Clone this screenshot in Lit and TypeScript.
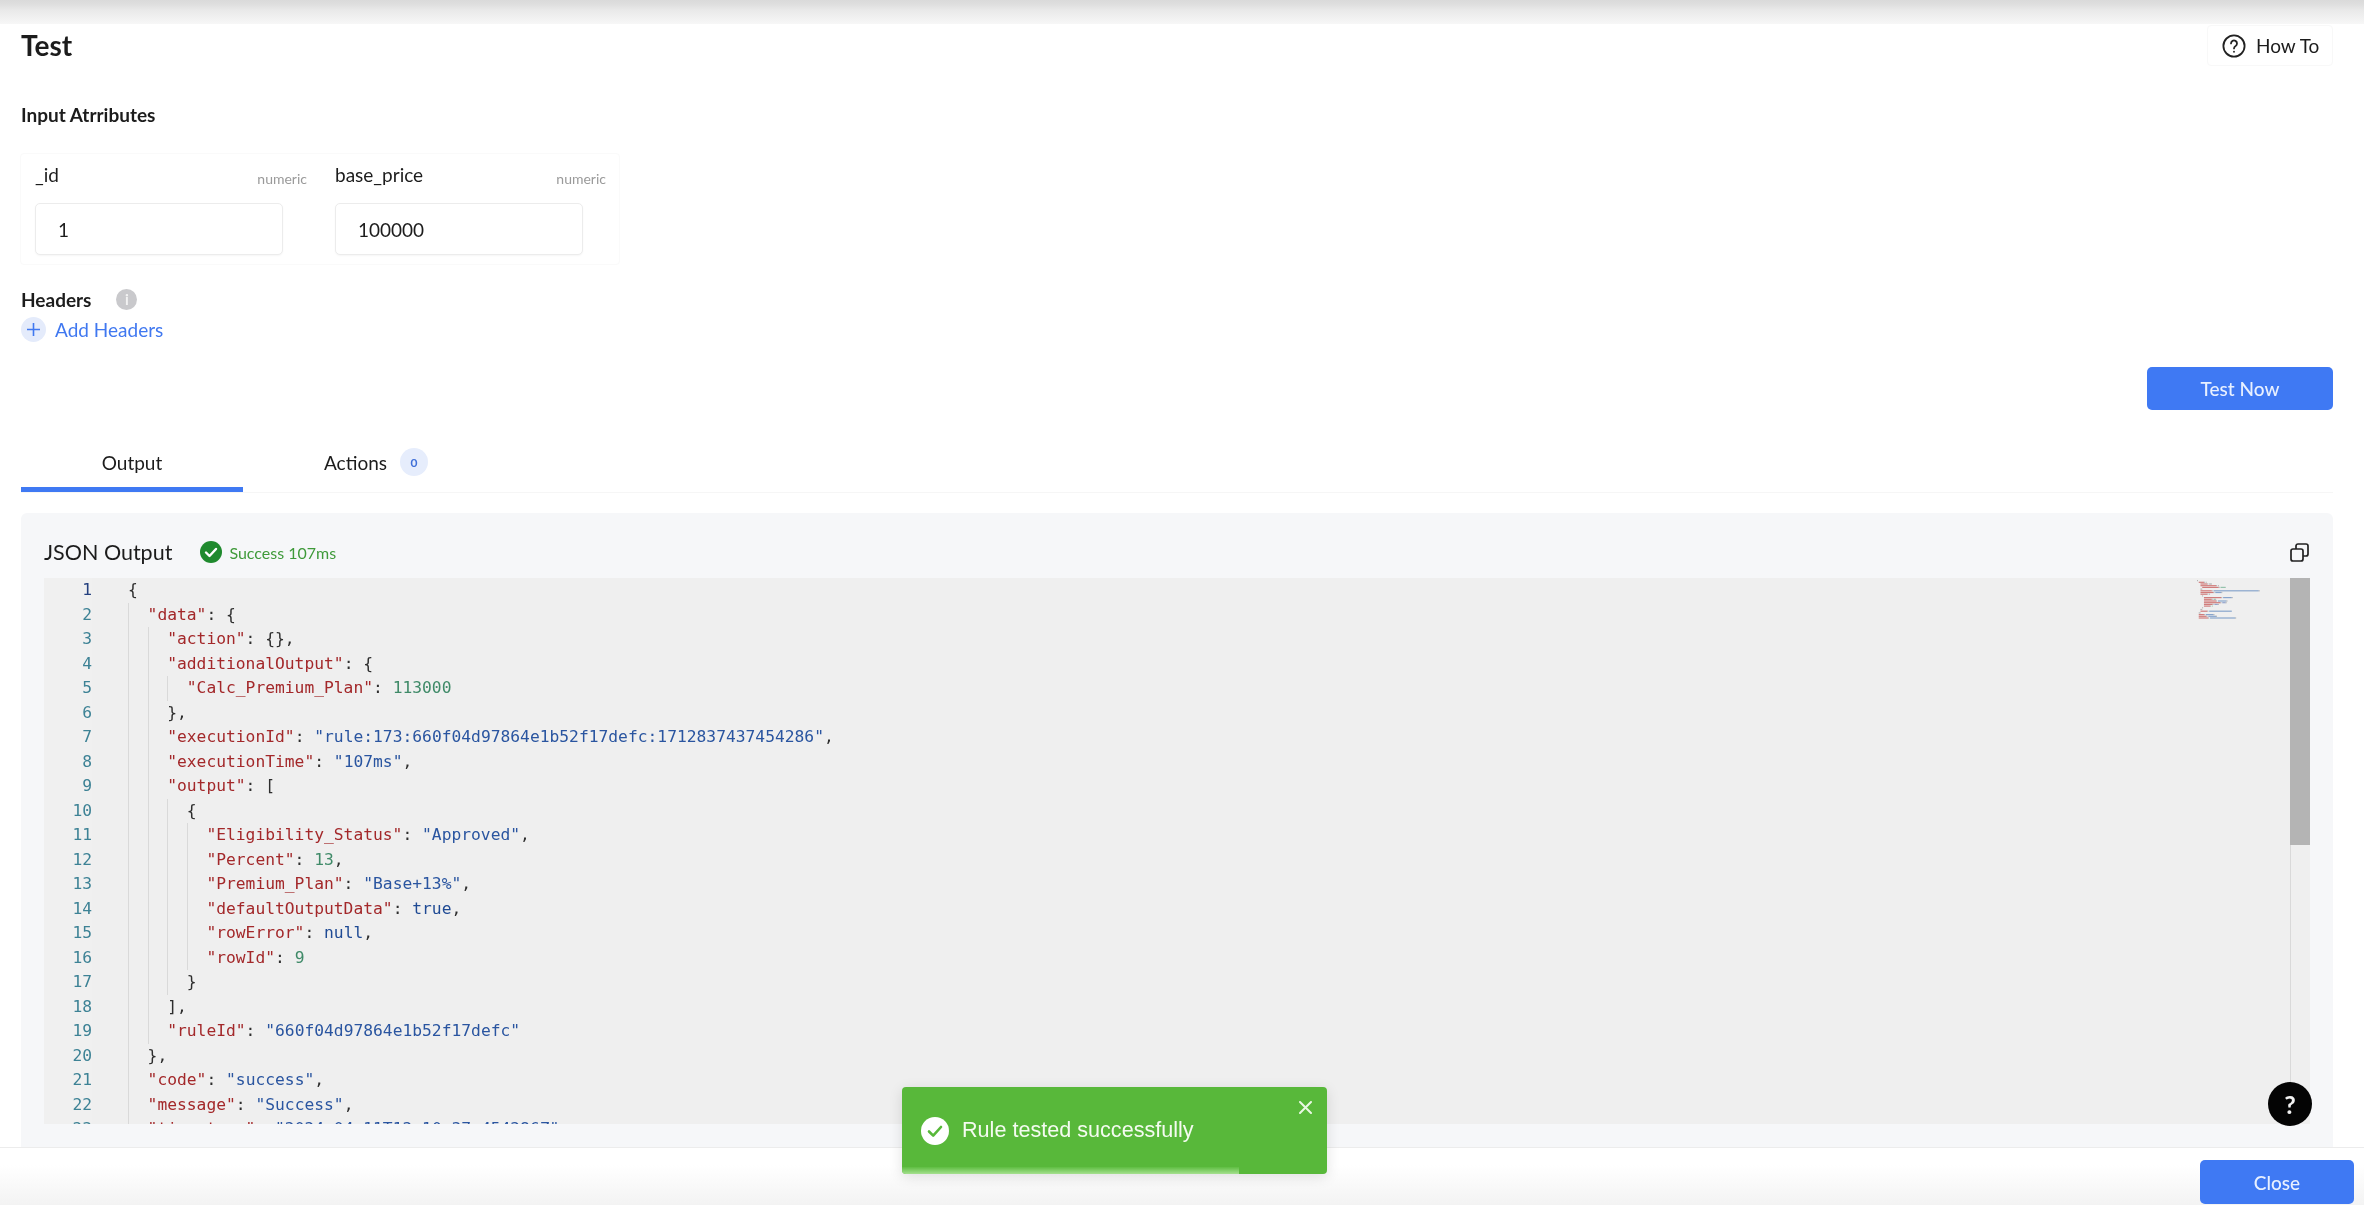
import { LitElement, html, css, svg } from "lit";
import { customElement } from "lit/decorators.js";

const CODE: string[] = [
  `{`,
  `  "data": {`,
  `    "action": {},`,
  `    "additionalOutput": {`,
  `      "Calc_Premium_Plan": 113000`,
  `    },`,
  `    "executionId": "rule:173:660f04d97864e1b52f17defc:1712837437454286",`,
  `    "executionTime": "107ms",`,
  `    "output": [`,
  `      {`,
  `        "Eligibility_Status": "Approved",`,
  `        "Percent": 13,`,
  `        "Premium_Plan": "Base+13%",`,
  `        "defaultOutputData": true,`,
  `        "rowError": null,`,
  `        "rowId": 9`,
  `      }`,
  `    ],`,
  `    "ruleId": "660f04d97864e1b52f17defc"`,
  `  },`,
  `  "code": "success",`,
  `  "message": "Success",`,
  `  "timestamp": "2024-04-11T12:10:37.454286Z",`,
];

type Tok = { t: string; c: string };

function tokenize(s: string): Tok[] {
  const re = /("(?:[^"\\]|\\.)*")(\s*:)?|\b(true|false|null)\b|(-?\d+(?:\.\d+)?)|([{}\[\],:])|(\s+)/g;
  const out: Tok[] = [];
  let m: RegExpExecArray | null;
  while ((m = re.exec(s))) {
    if (m[1] && m[2]) {
      out.push({ t: m[1], c: "key" });
      out.push({ t: m[2], c: "pun" });
    } else if (m[1]) out.push({ t: m[1], c: "str" });
    else if (m[3]) out.push({ t: m[3], c: "kw" });
    else if (m[4]) out.push({ t: m[4], c: "num" });
    else if (m[5]) out.push({ t: m[5], c: "pun" });
    else out.push({ t: m[0], c: "sp" });
  }
  return out;
}

const MINI: Record<string, string> = {
  key: "#c9605f",
  str: "#6f93c4",
  num: "#7fb79c",
  kw: "#7f93c4",
  pun: "#9a9a9a",
};

@customElement("app-root")
export class AppRoot extends LitElement {
  static styles = css`
    :host {
      display: block;
      width: 2364px;
      height: 1205px;
      overflow: hidden;
      position: relative;
      background: #fff;
      font-family: Lato, "Open Sans", sans-serif;
      color: #1c1c1c;
      filter: blur(0.55px);
    }
    .page {
      display: flex;
      flex-direction: column;
      height: 1205px;
    }
    .topbar {
      height: 24px;
      flex: none;
      background: linear-gradient(#dadada 0, #dedede 4px, #e9e9e9 10px, #f7f7f7 24px);
    }
    .content {
      flex: 1;
      min-height: 0;
      display: flex;
      flex-direction: column;
      padding: 0 31px 0 21px;
    }
    .head {
      display: flex;
      justify-content: space-between;
      align-items: center;
      height: 41px;
      margin-top: 1px;
      flex: none;
    }
    .title {
      font-size: 28px;
      font-weight: 700;
      line-height: 41px;
    }
    .howto {
      display: flex;
      align-items: center;
      gap: 10px;
      width: 126px;
      height: 41px;
      box-sizing: border-box;
      padding-left: 14px;
      border: 1px solid #f8f8f8;
      border-radius: 4px;
      font-size: 19px;
    }
    .howto svg { flex: none; }
    .section {
      font-size: 19px;
      font-weight: 700;
      line-height: 24px;
      margin-top: 37px;
      flex: none;
    }
    .inputs {
      width: 600px;
      height: 112px;
      box-sizing: border-box;
      margin-top: 26px;
      margin-left: -1px;
      padding: 9px 13px 0 14px;
      border: 1px solid #fafafa;
      border-radius: 4px;
      display: grid;
      grid-template-columns: 272px 1fr;
      column-gap: 28px;
      flex: none;
    }
    .field {
      display: flex;
      flex-direction: column;
    }
    .fieldhead {
      display: flex;
      justify-content: space-between;
      height: 40px;
      box-sizing: border-box;
      font-size: 19px;
      line-height: 24px;
    }
    .fieldhead small {
      font-size: 14px;
      color: #9a9a9a;
      margin-top: 4px;
    }
    input {
      width: 248px;
      height: 52px;
      box-sizing: border-box;
      border: 1px solid #ececec;
      border-radius: 5px;
      padding: 0 0 0 22px;
      font: 19px Lato, sans-serif;
      color: #1c1c1c;
      background: #fff;
      box-shadow: 0 1px 2px rgba(0, 0, 0, 0.04);
      outline: none;
    }
    .headers {
      display: flex;
      align-items: center;
      gap: 25px;
      height: 24px;
      margin-top: 22px;
      font-size: 19px;
      font-weight: 700;
      flex: none;
    }
    .info {
      width: 21px;
      height: 21px;
      border-radius: 50%;
      background: #c9c9cc;
      color: #f2f2f2;
      font-size: 15px;
      font-weight: 700;
      display: flex;
      align-items: center;
      justify-content: center;
    }
    .add {
      display: flex;
      align-items: center;
      gap: 9px;
      height: 26px;
      margin-top: 5px;
      font-size: 19px;
      color: #4078f0;
      flex: none;
    }
    .plus {
      width: 25px;
      height: 25px;
      border-radius: 50%;
      background: #e4ebfb;
      display: flex;
      align-items: center;
      justify-content: center;
    }
    .actions {
      display: flex;
      justify-content: flex-end;
      margin-top: 25px;
      flex: none;
    }
    .btn {
      border: none;
      border-radius: 5px;
      background: #3f79f3;
      color: #e8f0ff;
      font: 500 19px Lato, sans-serif;
      display: flex;
      align-items: center;
      justify-content: center;
      padding: 0;
    }
    .test { width: 186px; height: 43px; }
    .tabs {
      display: flex;
      height: 48px;
      margin-top: 34px;
      border-bottom: 1px solid #f6f6f6;
      flex: none;
      font-size: 19px;
    }
    .tab {
      display: flex;
      align-items: center;
      justify-content: center;
      height: 36px;
      padding-bottom: 7px;
    }
    .tab.active {
      width: 222px;
      border-bottom: 5px solid #3f79f3;
    }
    .tab.other {
      margin-left: 81px;
      gap: 13px;
    }
    .badge {
      width: 28px;
      height: 28px;
      border-radius: 50%;
      background: #e6edfc;
      color: #3f6fd8;
      font-size: 12px;
      font-weight: 700;
      display: flex;
      align-items: center;
      justify-content: center;
    }
    .panel {
      margin-top: 20px;
      flex: 1;
      min-height: 0;
      display: flex;
      flex-direction: column;
      background: #f6f7f9;
      border-radius: 6px 6px 0 0;
      padding: 0 23px 23px;
    }
    .panelhead {
      height: 65px;
      flex: none;
      display: flex;
      align-items: center;
      padding-top: 13px;
      box-sizing: border-box;
    }
    .jsontitle {
      font-size: 21.5px;
    }
    .ok {
      display: flex;
      align-items: center;
      gap: 7px;
      margin-left: 28px;
      font-size: 16px;
      color: #3f9a3a;
    }
    .copy { margin-left: auto; margin-right: 1px; display: block; }
    .editor {
      flex: 1;
      min-height: 0;
      position: relative;
      overflow: hidden;
      background: #efefef;
      display: flex;
      font-family: "DejaVu Sans Mono", monospace;
      font-size: 16.3px;
      line-height: 24.5px;
    }
    .gutter {
      width: 48px;
      flex: none;
      text-align: right;
      color: #3d8295;
      background: #f0f0f0;
    }
    .gutter div.first { color: #24407f; }
    .code {
      margin-left: 36px;
      flex: 1;
      color: #2e2e2e;
    }
    .ln {
      display: flex;
      height: 24.5px;
      white-space: pre;
    }
    .guide {
      width: 19.6px;
      flex: none;
      box-sizing: border-box;
      border-left: 1px solid #d9d9d9;
    }
    .key { color: #a3282a; }
    .str { color: #2a55a0; }
    .num { color: #3f8a68; }
    .kw { color: #1f4a94; }
    .pun { color: #2e2e2e; }
    .minimap {
      position: absolute;
      left: 2153px;
      top: 2px;
      opacity: 0.8;
    }
    .scrolltrack {
      position: absolute;
      right: 0;
      top: 0;
      bottom: 0;
      width: 20px;
      border-left: 1px solid #d9d9d9;
      box-sizing: border-box;
    }
    .thumb {
      height: 267px;
      margin-left: -1px;
      width: 20px;
      background: #b4b4b4;
    }
    .footer {
      height: 58px;
      flex: none;
      display: flex;
      justify-content: flex-end;
      align-items: flex-end;
      padding: 0 10px 1px 0;
      box-sizing: border-box;
      border-top: 1px solid #ececec;
      background: linear-gradient(#ffffff 0, #ffffff 30%, #f3f3f3 100%);
    }
    .close { width: 154px; height: 44px; }
    .help {
      position: absolute;
      left: 2268px;
      top: 1082px;
      width: 44px;
      height: 44px;
      border-radius: 50%;
      background: #040404;
      color: #f2f2f2;
      font-size: 25px;
      font-weight: 700;
      display: flex;
      align-items: center;
      justify-content: center;
    }
    .toast {
      position: absolute;
      left: 902px;
      top: 1087px;
      width: 425px;
      height: 87px;
      border-radius: 4px;
      overflow: hidden;
      background: #58b83a;
      color: #f4fbf0;
      box-shadow: 0 3px 14px rgba(0, 0, 0, 0.12);
      font-family: "Liberation Sans", Arial, sans-serif;
      font-size: 21.6px;
      display: flex;
      align-items: flex-start;
    }
    .toasticon {
      margin: 30px 0 0 19px;
      flex: none;
      display: block;
    }
    .toasttext {
      margin: 29px 0 0 13px;
      line-height: 28px;
    }
    .toastx {
      position: absolute;
      right: 15px;
      top: 14px;
      display: block;
    }
    .progress {
      position: absolute;
      left: 0;
      bottom: 0;
      width: 337px;
      height: 7px;
      background: linear-gradient(#5fbe42, #a5e08f);
    }
  `;

  private guides(line: string) {
    const n = Math.floor((line.length - line.trimStart().length) / 2);
    return Array.from({ length: n }, () => html`<span class="guide"></span>`);
  }

  private minimap() {
    const rects: unknown[] = [];
    CODE.forEach((line, y) => {
      let x = 0;
      for (const tok of tokenize(line)) {
        if (tok.c !== "sp") {
          rects.push(svg`<rect x=${x * 0.87} y=${y * 1.7} width=${tok.t.length * 0.87} height="1.2" fill=${MINI[tok.c]}></rect>`);
        }
        x += tok.t.length;
      }
    });
    return html`<svg class="minimap" width="64" height="42" viewBox="0 0 64 42">${rects}</svg>`;
  }

  render() {
    return html`
      <div class="page">
        <div class="topbar"></div>
        <div class="content">
          <div class="head">
            <div class="title">Test</div>
            <div class="howto">
              <svg width="24" height="24" viewBox="0 0 24 24" fill="none" stroke="#222" stroke-width="1.8" stroke-linecap="round">
                <circle cx="12" cy="12" r="10.6"></circle>
                <path d="M9 9.4a3 3 0 1 1 4.6 2.6c-1 .6-1.6 1.1-1.6 2.4"></path>
                <path d="M12 17.6v.2"></path>
              </svg>
              <span>How To</span>
            </div>
          </div>
          <div class="section">Input Atrributes</div>
          <div class="inputs">
            <div class="field">
              <div class="fieldhead"><span>_id</span><small>numeric</small></div>
              <input .value=${"1"} />
            </div>
            <div class="field">
              <div class="fieldhead"><span>base_price</span><small>numeric</small></div>
              <input .value=${"100000"} />
            </div>
          </div>
          <div class="headers"><span>Headers</span><span class="info">i</span></div>
          <div class="add">
            <span class="plus">
              <svg width="13" height="13" viewBox="0 0 13 13" stroke="#4078f0" stroke-width="1.6"><path d="M6.5 0v13M0 6.5h13"></path></svg>
            </span>
            <span>Add Headers</span>
          </div>
          <div class="actions"><button class="btn test">Test Now</button></div>
          <div class="tabs">
            <div class="tab active">Output</div>
            <div class="tab other"><span>Actions</span><span class="badge">0</span></div>
          </div>
          <div class="panel">
            <div class="panelhead">
              <span class="jsontitle">JSON Output</span>
              <span class="ok">
                <svg width="22" height="22" viewBox="0 0 22 22">
                  <circle cx="11" cy="11" r="11" fill="#1f8a2e"></circle>
                  <path d="M6 11.5l3.5 3.5L16 8" fill="none" stroke="#fff" stroke-width="2.4" stroke-linecap="round" stroke-linejoin="round"></path>
                </svg>
                <span>Success 107ms</span>
              </span>
              <svg class="copy" width="19" height="19" viewBox="0 0 19 19" fill="none" stroke="#222" stroke-width="1.7">
                <rect x="1" y="6" width="12" height="12" rx="2"></rect>
                <path d="M6 6V3a2 2 0 0 1 2-2h8a2 2 0 0 1 2 2v8a2 2 0 0 1-2 2h-3"></path>
              </svg>
            </div>
            <div class="editor">
              <div class="gutter">
                ${CODE.map((_, i) => html`<div class=${i === 0 ? "first" : ""}>${i + 1}</div>`)}
              </div>
              <div class="code">
                ${CODE.map((line) => html`<div class="ln">${this.guides(line)}<span>${tokenize(line.trimStart()).map((k) => html`<span class=${k.c}>${k.t}</span>`)}</span></div>`)}
              </div>
              ${this.minimap()}
              <div class="scrolltrack"><div class="thumb"></div></div>
            </div>
          </div>
        </div>
        <div class="footer"><button class="btn close">Close</button></div>
      </div>
      <div class="help">?</div>
      <div class="toast">
        <svg class="toasticon" width="28" height="28" viewBox="0 0 28 28">
          <circle cx="14" cy="14" r="14" fill="#fff"></circle>
          <path d="M8 14.5l4.2 4.2L20 10" fill="none" stroke="#58b83a" stroke-width="2.6" stroke-linecap="round" stroke-linejoin="round"></path>
        </svg>
        <span class="toasttext">Rule tested successfully</span>
        <svg class="toastx" width="13" height="13" viewBox="0 0 13 13" stroke="#e9f7e3" stroke-width="2" stroke-linecap="round"><path d="M1 1l11 11M12 1L1 12"></path></svg>
        <div class="progress"></div>
      </div>
    `;
  }
}
